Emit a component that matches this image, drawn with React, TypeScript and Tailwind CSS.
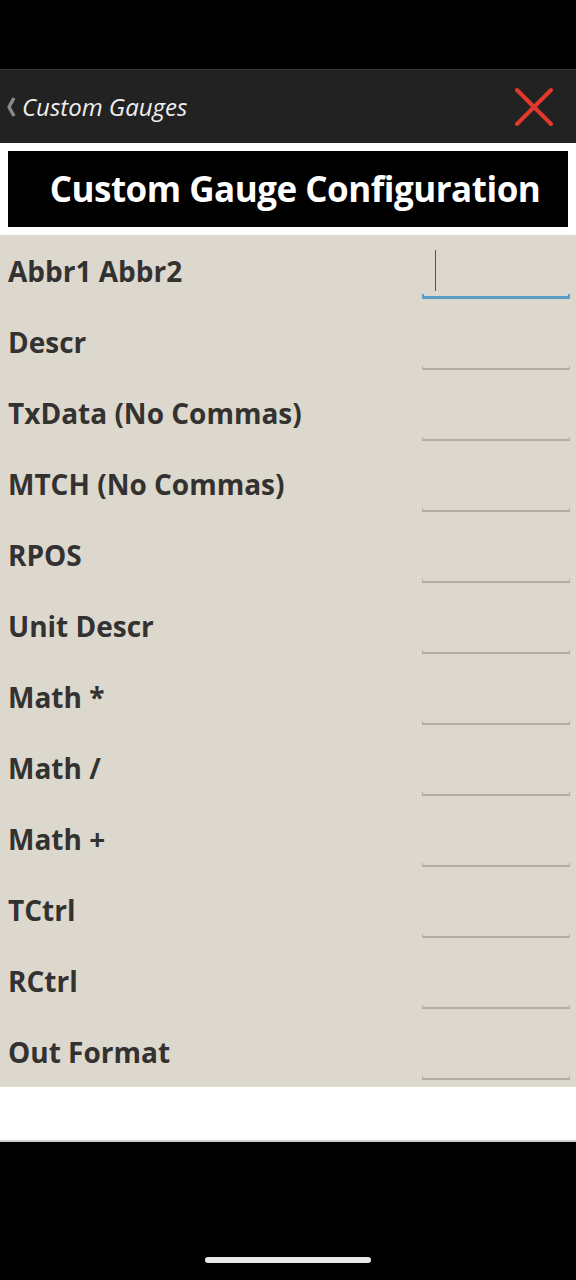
import React from "react";

const fields = [
  "Abbr1 Abbr2",
  "Descr",
  "TxData (No Commas)",
  "MTCH (No Commas)",
  "RPOS",
  "Unit Descr",
  "Math *",
  "Math /",
  "Math +",
  "TCtrl",
  "RCtrl",
  "Out Format",
];

function Field({ label, active }: { label: string; active?: boolean }) {
  return (
    <div className="flex h-[71px] items-start justify-between">
      <span className="pl-2 pt-[18px] text-[28px] font-bold leading-[36px] text-[#333230]">{label}</span>
      <div className="relative mr-[6px] mt-[12px] h-[52px] w-[148px]">
        {active && <div className="absolute left-[13px] top-[3px] h-[41px] w-px bg-[#555]" />}
        {active ? (
          <div className="absolute bottom-0 left-0 right-0 h-[5px] border-x-2 border-b-[3px] border-[#5a9ec6]" />
        ) : (
          <div className="absolute bottom-0 left-0 right-0 h-[4px] border-x border-b-2 border-[#b3ae9f]" />
        )}
      </div>
    </div>
  );
}

export default function App() {
  return (
    <div className="flex h-[1280px] w-[576px] flex-col bg-black font-['Open_Sans',sans-serif]">
      <div className="h-[70px] shrink-0 border-b border-[#3a3a3a]" />
      <div className="flex h-[73px] shrink-0 items-center justify-between bg-[#222222] pl-[6px] pr-[22px]">
        <div className="flex items-center gap-[6px]">
          <svg width="10" height="20" viewBox="0 0 10 20">
            <path d="M8 1 L3 10 L8 19" stroke="#8a8a8a" strokeWidth="3.5" fill="none" strokeLinejoin="round" />
          </svg>
          <span className="text-[24px] italic text-[#eeeeee]">Custom Gauges</span>
        </div>
        <svg width="40" height="40" viewBox="0 0 40 40">
          <path d="M3 3 L37 37 M37 3 L3 37" stroke="#e3392c" strokeWidth="4" strokeLinecap="round" />
        </svg>
      </div>
      <div className="shrink-0 bg-white px-2 pb-2 pt-[8px]">
        <div className="flex h-[76px] items-center justify-center bg-black pl-[14px]">
          <span className="text-[35px] font-bold tracking-[-0.5px] text-white">Custom Gauge Configuration</span>
        </div>
      </div>
      <div className="shrink-0 bg-[#dcd8ce]">
        {fields.map((f, i) => (
          <Field key={f} label={f} active={i === 0} />
        ))}
      </div>
      <div className="h-[55px] shrink-0 border-b-2 border-[#cfcfcf] bg-white" />
      <div className="relative flex-1">
        <div className="absolute left-[205px] top-[115px] h-[6px] w-[166px] rounded-full bg-[#e8e8e8]" />
      </div>
    </div>
  );
}
